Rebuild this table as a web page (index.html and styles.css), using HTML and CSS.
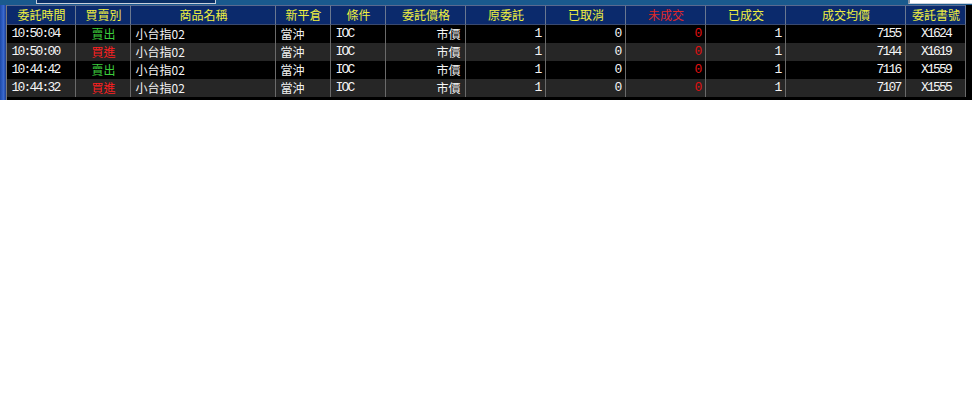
FILE: index.html
```html
<!DOCTYPE html>
<html lang="zh-Hant">
<head>
<meta charset="utf-8">
<link rel="stylesheet" href="styles.css">
</head>
<body>
<div class="panel">
  <div class="topbar">
    <div class="field field-left"></div>
    <div class="field field-right"></div>
  </div>
  <div class="main">
    <div class="strip"></div>
    <div class="grid">
      <div class="h">委託時間</div><div class="h">買賣別</div><div class="h">商品名稱</div><div class="h">新平倉</div><div class="h">條件</div><div class="h">委託價格</div><div class="h">原委託</div><div class="h">已取消</div><div class="h red">未成交</div><div class="h">已成交</div><div class="h">成交均價</div><div class="h">委託書號</div>

      <div class="c num">10:50:04</div><div class="c ctr sell">賣出</div><div class="c">小台指02</div><div class="c">當沖</div><div class="c num">IOC</div><div class="c r">市價</div><div class="c r num">1</div><div class="c r num">0</div><div class="c r num zero">0</div><div class="c r num">1</div><div class="c r num">7155</div><div class="c ctr num">X1624</div>

      <div class="c num alt">10:50:00</div><div class="c ctr buy alt">買進</div><div class="c alt">小台指02</div><div class="c alt">當沖</div><div class="c num alt">IOC</div><div class="c r alt">市價</div><div class="c r num alt">1</div><div class="c r num alt">0</div><div class="c r num zero alt">0</div><div class="c r num alt">1</div><div class="c r num alt">7144</div><div class="c ctr num alt">X1619</div>

      <div class="c num">10:44:42</div><div class="c ctr sell">賣出</div><div class="c">小台指02</div><div class="c">當沖</div><div class="c num">IOC</div><div class="c r">市價</div><div class="c r num">1</div><div class="c r num">0</div><div class="c r num zero">0</div><div class="c r num">1</div><div class="c r num">7116</div><div class="c ctr num">X1559</div>

      <div class="c num alt">10:44:32</div><div class="c ctr buy alt">買進</div><div class="c alt">小台指02</div><div class="c alt">當沖</div><div class="c num alt">IOC</div><div class="c r alt">市價</div><div class="c r num alt">1</div><div class="c r num alt">0</div><div class="c r num zero alt">0</div><div class="c r num alt">1</div><div class="c r num alt">7107</div><div class="c ctr num alt">X1555</div>
    </div>
    <div class="rstrip"></div>
  </div>
</div>
</body>
</html>
```

FILE: styles.css
```css
html, body {
  margin: 0;
  padding: 0;
  background: #ffffff;
}

.panel {
  width: 972px;
  height: 100px;
  background: #000000;
  display: flex;
  flex-direction: column;
}

.topbar {
  height: 5px;
  background: #1a5a8e;
  display: flex;
  align-items: flex-end;
  overflow: hidden;
}

.field {
  height: 6px;
  box-sizing: border-box;
  border: 1px solid #c8d0dc;
  border-top: none;
  background: #0b2f66;
  margin-bottom: 1px;
}

.field-left {
  margin-left: 36px;
  width: 180px;
}

.field-right {
  margin-left: auto;
  width: 64px;
  border-right: none;
  background: #ffffff;
  border-left: 2px solid #8a94a4;
}

.main {
  display: flex;
  flex: 1;
}

.strip {
  width: 7px;
  background: linear-gradient(to right, #1c48a8, #3a6ad0 60%, #1a3c90);
}

.rstrip {
  width: 6px;
  background: #000000;
}

.grid {
  display: grid;
  grid-template-columns: 69px 55px 145px 55px 55px 80px 80px 80px 80px 80px 120px 60px;
  grid-template-rows: 20px repeat(4, 18px);
  align-content: start;
  border-left: 1px solid #7a7a7a;
  height: 100%;
  background: #000000;
  box-sizing: border-box;
}

.h {
  background: #0b2a6c;
  color: #f0f040;
  font-family: "Noto Sans CJK TC", sans-serif;
  font-size: 12px;
  line-height: 18px;
  text-align: center;
  border-right: 1px solid #6a7890;
  border-top: 1px solid #5a6a90;
  border-bottom: 1px solid #3a4a70;
  box-sizing: border-box;
  white-space: nowrap;
}

.h.red {
  color: #e02828;
}

.c {
  color: #f4f4f4;
  font-family: "Noto Sans CJK TC", sans-serif;
  font-size: 12px;
  line-height: 18px;
  height: 18px;
  padding: 0 4px;
  border-right: 1px solid #6a6a6a;
  box-sizing: border-box;
  white-space: nowrap;
  overflow: hidden;
  background: #000000;
}

.c.alt {
  background: #262626;
}

.num {
  font-family: "Liberation Mono", "DejaVu Sans Mono", monospace;
  font-size: 13px;
  letter-spacing: -1.8px;
}

.r {
  text-align: right;
  padding-right: 5px;
}

.ctr {
  text-align: center;
}

.sell {
  color: #3ccc3c;
}

.buy {
  color: #ff2020;
}

.zero {
  color: #e01010;
}
```
